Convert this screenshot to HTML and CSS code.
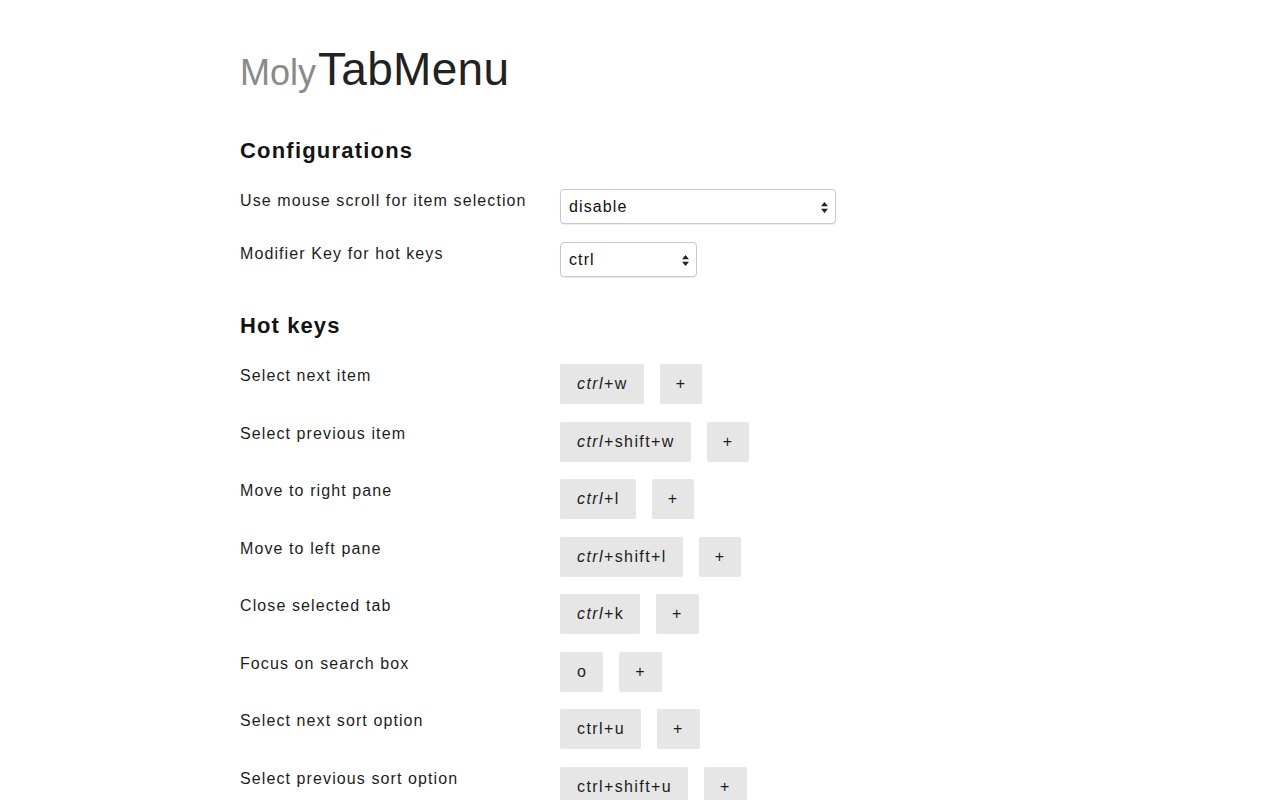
FILE: index.html
```html
<!DOCTYPE html>
<html lang="en">
<head>
<meta charset="utf-8">
<title>MolyTabMenu Options</title>
<link rel="stylesheet" href="styles.css">
</head>
<body>
<main class="page">
  <h1 class="title"><span class="title-moly">Moly</span><span class="title-main">TabMenu</span></h1>

  <section class="section section-config">
    <h2 class="section-title">Configurations</h2>
    <div class="row row-config">
      <div class="label">Use mouse scroll for item selection</div>
      <div class="control">
        <div class="select select-wide">
          <span class="select-value">disable</span>
          <svg class="select-arrows" width="7" height="11" viewBox="0 0 7 11"><path d="M3.5 0 L7 4.2 L0 4.2 Z M3.5 11 L7 6.8 L0 6.8 Z" fill="#222"/></svg>
        </div>
      </div>
    </div>
    <div class="row row-config">
      <div class="label">Modifier Key for hot keys</div>
      <div class="control">
        <div class="select select-narrow">
          <span class="select-value">ctrl</span>
          <svg class="select-arrows" width="7" height="11" viewBox="0 0 7 11"><path d="M3.5 0 L7 4.2 L0 4.2 Z M3.5 11 L7 6.8 L0 6.8 Z" fill="#222"/></svg>
        </div>
      </div>
    </div>
  </section>

  <section class="section section-keys">
    <h2 class="section-title section-title-keys">Hot keys</h2>
    <div class="row row-key">
      <div class="label">Select next item</div>
      <div class="control keys"><button class="key"><i class="mod">ctrl</i>+w</button><button class="key key-add">+</button></div>
    </div>
    <div class="row row-key">
      <div class="label">Select previous item</div>
      <div class="control keys"><button class="key"><i class="mod">ctrl</i>+shift+w</button><button class="key key-add">+</button></div>
    </div>
    <div class="row row-key">
      <div class="label">Move to right pane</div>
      <div class="control keys"><button class="key"><i class="mod">ctrl</i>+l</button><button class="key key-add">+</button></div>
    </div>
    <div class="row row-key">
      <div class="label">Move to left pane</div>
      <div class="control keys"><button class="key"><i class="mod">ctrl</i>+shift+l</button><button class="key key-add">+</button></div>
    </div>
    <div class="row row-key">
      <div class="label">Close selected tab</div>
      <div class="control keys"><button class="key"><i class="mod">ctrl</i>+k</button><button class="key key-add">+</button></div>
    </div>
    <div class="row row-key">
      <div class="label">Focus on search box</div>
      <div class="control keys"><button class="key">o</button><button class="key key-add">+</button></div>
    </div>
    <div class="row row-key">
      <div class="label">Select next sort option</div>
      <div class="control keys"><button class="key">ctrl+u</button><button class="key key-add">+</button></div>
    </div>
    <div class="row row-key">
      <div class="label">Select previous sort option</div>
      <div class="control keys"><button class="key">ctrl+shift+u</button><button class="key key-add">+</button></div>
    </div>
  </section>
</main>
</body>
</html>
```

FILE: styles.css
```css
* {
  box-sizing: border-box;
}

html, body {
  margin: 0;
  padding: 0;
  background: #ffffff;
}

body {
  font-family: "Liberation Sans", Arial, sans-serif;
  color: #1d1d1d;
  font-size: 16px;
}

.page {
  width: 800px;
  margin: 0 auto;
  padding-top: 43px;
}

.title {
  margin: 0 0 39px;
  font-size: 46px;
  line-height: 52px;
  font-weight: normal;
  color: #222222;
  letter-spacing: 0.3px;
}

.title-moly {
  font-size: 36px;
  color: #8a8a8a;
  letter-spacing: 0;
  margin-right: 2px;
}

.section-title {
  margin: 0 0 25px;
  font-size: 22px;
  line-height: 26px;
  font-weight: bold;
  color: #141414;
  letter-spacing: 1.2px;
}

.section-title-keys {
  letter-spacing: 1.1px;
}

.section-config {
  margin-bottom: 36px;
}

.row {
  display: grid;
  grid-template-columns: 320px 1fr;
  align-items: start;
}

.row-config {
  margin-bottom: 18px;
}

.row-config:last-child {
  margin-bottom: 0;
}

.row-key {
  margin-bottom: 17.5px;
}

.label {
  line-height: 24px;
  letter-spacing: 1.1px;
}

.select {
  display: flex;
  align-items: center;
  justify-content: space-between;
  height: 35px;
  padding: 0 7px 0 8px;
  border: 1px solid #c9c9c9;
  border-radius: 4px;
  background: #ffffff;
  box-shadow: 0 1px 1px rgba(0, 0, 0, 0.08);
}

.select-wide {
  width: 276px;
}

.select-narrow {
  width: 137px;
}

.select-value {
  font-size: 16px;
  letter-spacing: 1.1px;
  color: #111;
}

.select-arrows {
  display: block;
  margin-top: 1px;
}

.keys {
  display: flex;
  gap: 16px;
}

.key {
  font-family: "Liberation Sans", Arial, sans-serif;
  font-size: 16px;
  line-height: 24px;
  letter-spacing: 1.4px;
  color: #1d1d1d;
  background: #e6e6e6;
  border: none;
  border-radius: 2px;
  padding: 8px 16px 8px 17px;
  margin: 0;
  cursor: pointer;
}

.key-add {
  padding: 8px 16px;
}

.mod {
  font-style: italic;
  letter-spacing: 1.4px;
  margin-right: 0;
}
```
